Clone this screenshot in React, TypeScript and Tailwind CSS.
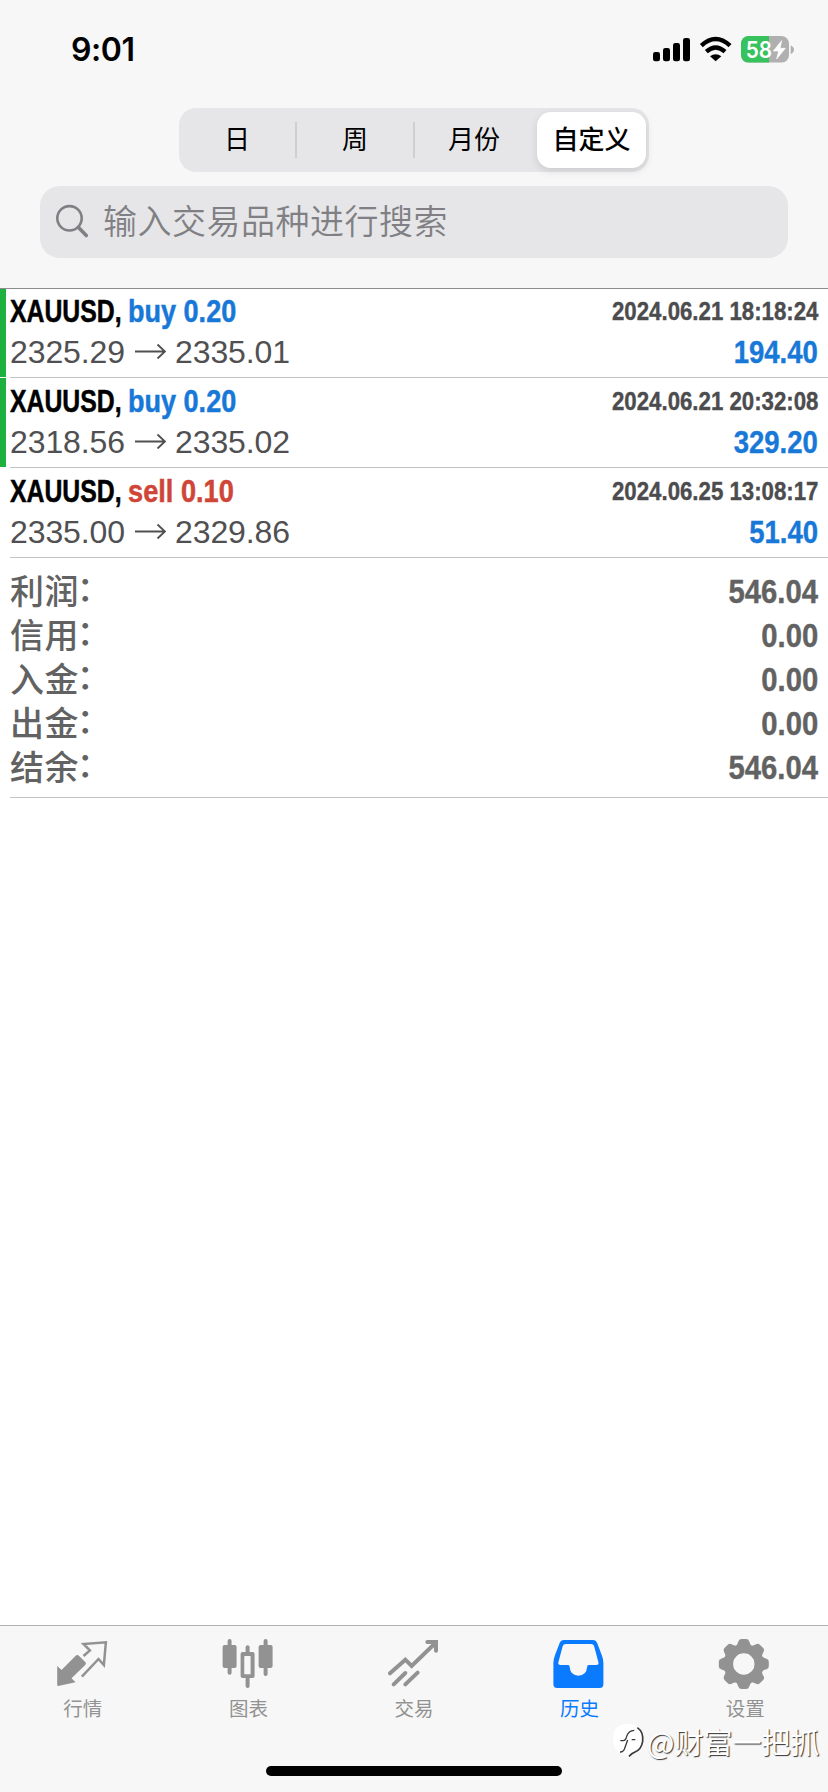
import type { ReactNode } from 'react';

const trades = [
  { side: 'buy 0.20', open: '2325.29', close: '2335.01', time: '2024.06.21 18:18:24', profit: '194.40', marked: true },
  { side: 'buy 0.20', open: '2318.56', close: '2335.02', time: '2024.06.21 20:32:08', profit: '329.20', marked: true },
  { side: 'sell 0.10', open: '2335.00', close: '2329.86', time: '2024.06.25 13:08:17', profit: '51.40', marked: false },
];

const totals = [
  ['利润', '546.04'],
  ['信用', '0.00'],
  ['入金', '0.00'],
  ['出金', '0.00'],
  ['结余', '546.04'],
];

function StatusBar() {
  return (
    <div className="flex h-[108px] justify-between pl-[71px] pr-[28px]">
      <div className="mt-[26px] h-12 font-['Inter',sans-serif] text-[32px] font-semibold leading-[48px] tracking-[-0.4px] text-black">9:01</div>
      <svg className="mt-[30px] h-10 w-[150px] shrink-0" viewBox="708 90 450 120">
        <rect x="717" y="156" width="21" height="28" rx="7" />
        <rect x="747" y="144" width="21" height="40" rx="7" />
        <rect x="777" y="129" width="21" height="55" rx="7" />
        <rect x="807" y="114" width="21" height="70" rx="7" />
        <g fill="none" stroke="#000" strokeWidth="13">
          <path d="M862 137 Q905 97 948 137" />
          <path d="M877 155 Q905 130 933 155" />
        </g>
        <path d="M888 169 Q905 156 922 169 L905 184Z" />
        <clipPath id="cell"><rect x="981" y="108" width="144" height="80" rx="23" /></clipPath>
        <g clipPath="url(#cell)">
          <rect x="981" y="108" width="144" height="80" fill="#b0b0b1" />
          <rect x="981" y="108" width="84" height="80" fill="#36c35d" />
        </g>
        <path d="M1130 136 Q1140 141 1140 149 Q1140 157 1130 162Z" fill="#b0b0b1" />
        <text x="995" y="173" textLength="79" lengthAdjust="spacingAndGlyphs" fontFamily="Inter, sans-serif" fontWeight="600" fontSize="67" fill="#fff">58</text>
        <path d="M1103 122 L1078 153 H1094 L1088 177 L1114 145 H1098Z" fill="#fff" stroke="#fff" strokeWidth="2" strokeLinejoin="round" />
      </svg>
    </div>
  );
}

function Segments() {
  return (
    <div className="mx-auto flex h-16 w-[470px] items-center rounded-[17px] bg-[#e6e6e8] text-[26px] leading-none text-black">
      <div className="w-[116px] text-center">日</div>
      <div className="h-9 w-[2px] bg-[#cfcfd1]" />
      <div className="w-[116px] text-center">周</div>
      <div className="h-9 w-[2px] bg-[#cfcfd1]" />
      <div className="w-[118px] text-center">月份</div>
      <div className="ml-[4px] flex h-14 w-[109px] items-center justify-center rounded-[14px] bg-white font-medium shadow-[0_3px_8px_rgba(0,0,0,0.12)]">自定义</div>
    </div>
  );
}

function Search() {
  return (
    <div className="mx-10 mt-[14px] flex h-[72px] items-center rounded-[20px] bg-[#e6e6e8] text-[#808084]">
      <svg className="ml-[14px] h-9 w-9" viewBox="0 0 36 36" fill="none" stroke="currentColor">
        <circle cx="15.5" cy="14.3" r="12.2" strokeWidth="2.6" />
        <path d="M24.3 23.3 L32.3 31.5" strokeWidth="3.6" strokeLinecap="round" />
      </svg>
      <div className="ml-[13px] text-[34px] font-[350] leading-[72px] tracking-[0.5px]">输入交易品种进行搜索</div>
    </div>
  );
}

function Trade({ t }: { t: (typeof trades)[number] }) {
  const sell = t.side.startsWith('sell');
  return (
    <div className="flex h-[90px]">
      <div className={t.marked ? 'mb-px w-[6px] bg-[#1fb13f]' : 'w-[6px]'} />
      <div className="ml-[4px] flex flex-1 justify-between border-b border-[#c3c3c5] pr-[10px] pt-px">
        <div>
          <div className="flex h-[42px] whitespace-nowrap text-[32px] font-bold leading-[44px] [-webkit-text-stroke:0.5px]">
            <div className="w-[118px]"><div className="w-max origin-left scale-x-[0.775] text-black">XAUUSD,</div></div>
            <div className={sell ? 'w-max origin-left scale-x-[0.85] text-[#cf4538]' : 'w-max origin-left scale-x-[0.845] text-[#1878d8]'}>{t.side}</div>
          </div>
          <div className="flex h-[40px] items-center text-[32px] leading-[40px] text-[#505052]">
            <span className="w-[125px] pt-[2px] tracking-[-0.1px]">{t.open}</span>
            <svg className="h-4 w-[31px]" viewBox="0 0 31 16" fill="none" stroke="currentColor" strokeWidth="1.9">
              <path d="M0 8.5 H30 M22.5 1.5 L30 8.5 L22.5 15.5" />
            </svg>
            <span className="ml-[9px] pt-[2px] tracking-[-0.1px]">{t.close}</span>
          </div>
        </div>
        <div className="flex flex-col items-end whitespace-nowrap font-bold [-webkit-text-stroke:0.4px]">
          <div className="h-[42px] origin-right scale-x-[0.855] text-[26px] leading-[45px] text-[#4c4c4e]">{t.time}</div>
          <div className="h-[40px] origin-right scale-x-[0.86] text-[32px] leading-[43px] text-[#1878d8]">{t.profit}</div>
        </div>
      </div>
    </div>
  );
}

function Tab({ label, box, active, children }: { label: string; box: string; active?: boolean; children: ReactNode }) {
  return (
    <div className={active ? 'flex flex-1 flex-col items-center text-[#0a7aff]' : 'flex flex-1 flex-col items-center text-[#929292]'}>
      <svg className="mt-[12px] h-[50px] w-[50px] overflow-visible" viewBox={box} fill="currentColor">{children}</svg>
      <div className="mt-[6px] text-[19.5px] leading-[30px]">{label}</div>
    </div>
  );
}

export default function App() {
  return (
    <div className="flex h-[1792px] w-[828px] flex-col overflow-hidden bg-white font-['Liberation_Sans','Noto_Sans_CJK_SC',sans-serif]">
      <header className="relative z-10 -mb-px h-[289px] shrink-0 border-b border-[#8d8d8f] bg-[#f7f7f7]">
        <StatusBar />
        <Segments />
        <Search />
      </header>

      <main className="flex-1">
        {trades.map((t) => <Trade key={t.time} t={t} />)}
        <div className="ml-[10px] h-[240px] border-b border-[#c3c3c5] pr-[10px] pt-[12px] text-[#626262]">
          {totals.map(([name, value]) => (
            <div key={name} className="flex h-11 justify-between leading-[44px]">
              <div className="flex text-[34px] font-medium tracking-[0.4px]">
                {name}
                <span className="-ml-[2px] -mt-[3px]">：</span>
              </div>
              <div className="-mt-px origin-right scale-x-[0.86] text-[34px] font-bold [-webkit-text-stroke:0.4px]">{value}</div>
            </div>
          ))}
        </div>
      </main>

      <footer className="relative h-[167px] shrink-0 border-t border-[#b0b0b2] bg-[#f7f7f7]">
        <nav className="flex">
          <Tab label="行情" box="173.4 84 150 150">
            <path d="M228 136 Q232 133 236 137 L256 157 Q259 161 255 165 L214 205 L226 217 L174 228 Q171 228 171 224 V168 L184 180Z" />
            <path d="M250 138 L269 121 L250 102 L317 97 L311 165 L295 147 L245 200" fill="none" stroke="currentColor" strokeWidth="7.5" />
          </Tab>
          <Tab label="图表" box="670.2 84 150 150">
            <rect x="684" y="87" width="12" height="107" rx="6" />
            <rect x="669" y="105" width="42" height="69" rx="6" />
            <rect x="792" y="87" width="12" height="111" rx="6" />
            <rect x="777" y="105" width="42" height="69" rx="6" />
            <rect x="738" y="106" width="12" height="128" rx="6" />
            <rect x="723" y="126" width="42" height="78" rx="6" />
            <rect x="734" y="138" width="19" height="55" rx="2" fill="#f7f7f7" />
          </Tab>
          <Tab label="交易" box="327 84 150 150">
            <g fill="none" stroke="currentColor" strokeWidth="12" strokeLinecap="round">
              <path d="M330 190 L376 149 L395 168 L463 102" strokeLinejoin="miter" />
              <path d="M341 223 L376 189 M376 223 L413 188" />
              <path d="M442 96 H468 V122" />
            </g>
            <path d="M450 91 H474 V116Z" />
          </Tab>
          <Tab label="历史" box="19.8 84 150 150" active>
            <path fillRule="evenodd" d="M45 90 H135 Q143 90 146 98 L160 135 Q165 147 165 160 V223 Q165 234 154 234 H26 Q15 234 15 223 V160 Q15 147 20 135 L34 98 Q37 90 45 90Z M52 102 Q45 102 43 108 L30 157 Q28 165 36 165 H59 Q64 165 64 172 Q66 197 90 197 Q114 197 116 172 Q116 165 121 165 H144 Q152 165 150 157 L137 108 Q135 102 128 102Z" />
          </Tab>
          <Tab label="设置" box="516.6 84 150 150">
            <g transform="translate(588 162)">
              {[0, 45, 90, 135, 180, 225, 270, 315].map((a) => (
                <path key={a} transform={`rotate(${a})`} d="M-27 -50 Q-19 -56 -16 -68 Q-14 -75 -7 -75 H7 Q14 -75 16 -68 Q19 -56 27 -50 L0 -20Z" />
              ))}
              <circle r="46" fill="none" stroke="currentColor" strokeWidth="28" />
              <circle r="32" fill="#f7f7f7" />
            </g>
          </Tab>
        </nav>
        <div className="mx-auto mt-[42px] h-[10px] w-[296px] rounded-full bg-black" />
        <div className="absolute left-[613px] top-[95px] flex items-center whitespace-nowrap">
          <svg className="h-10 w-[34px]" viewBox="192 343 102 120" fill="none">
            <path d="M192 394 Q192 352 236 352 Q280 352 280 396 Q280 430 252 438 L238 450 Q192 440 192 394Z" fill="#fff" />
            <g stroke="#3a3a3a" strokeWidth="5">
              <path d="M265 363 Q284 376 281 404 Q277 428 258 436 Q248 440 240 449" />
              <path d="M214 402 H222 Q230 402 233 389 Q238 372 256 371 M236 400 L226 428 Q222 437 213 436 M248 399 H259" strokeWidth="4" />
            </g>
          </svg>
          <div className="font-['Noto_Sans_CJK_SC',sans-serif] text-[29px] leading-[40px] text-white [text-shadow:1px_1px_1px_#333]">@财富一把抓</div>
        </div>
      </footer>
    </div>
  );
}
